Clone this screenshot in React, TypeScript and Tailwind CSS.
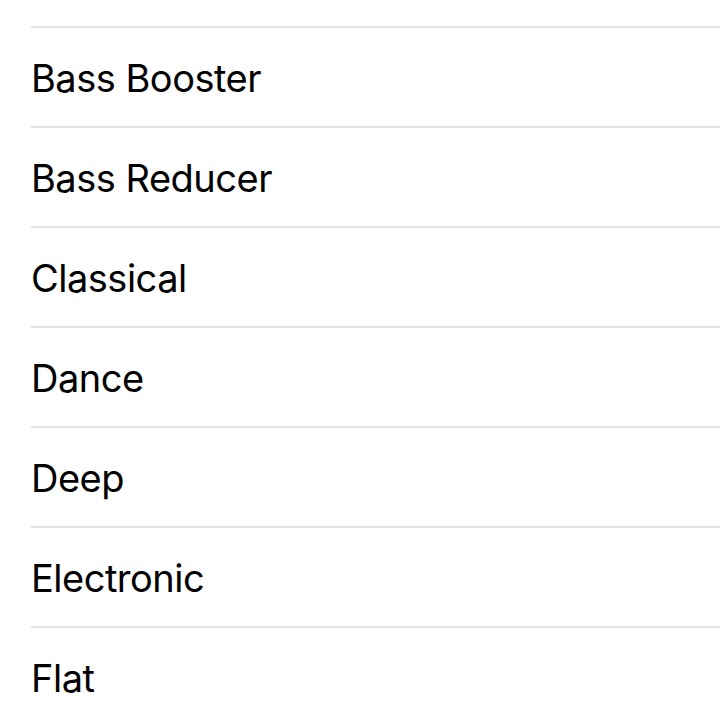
const presets = ['Bass Booster', 'Bass Reducer', 'Classical', 'Dance', 'Deep', 'Electronic', 'Flat'];

export default function App() {
    return (
        <div className="h-[720px] w-[720px] overflow-hidden bg-white" style={{ fontFamily: 'Inter, "Noto Sans", sans-serif' }}>
            {/* previous row, cut off at the top */}
            <div className="h-[26px]" />
            <ul className="pl-[31px]">
                {presets.map((name) => (
                    <li
                        key={name}
                        className="flex h-[100px] items-center border-t-2 border-[#e3e3e3] pt-[2px] text-[38px] tracking-[-0.5px] text-black"
                    >
                        {name}
                    </li>
                ))}
            </ul>
        </div>
    );
}
